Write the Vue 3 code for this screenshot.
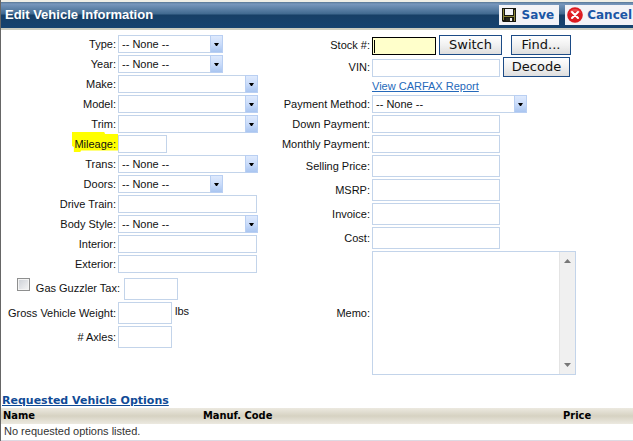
<script setup>
import { ref } from 'vue'

const none = '-- None --'
const leftFields = [
  { id: 'type', label: 'Type:', kind: 'select', size: 'short', value: none },
  { id: 'year', label: 'Year:', kind: 'select', size: 'short', value: none },
  { id: 'make', label: 'Make:', kind: 'select', size: 'long', value: '' },
  { id: 'model', label: 'Model:', kind: 'select', size: 'long', value: '' },
  { id: 'trim', label: 'Trim:', kind: 'select', size: 'long', value: '' },
  { id: 'mileage', label: 'Mileage:', kind: 'text', size: 'tiny', marked: true },
  { id: 'trans', label: 'Trans:', kind: 'select', size: 'long', value: none },
  { id: 'doors', label: 'Doors:', kind: 'select', size: 'short', value: none },
  { id: 'drive', label: 'Drive Train:', kind: 'text', size: 'long' },
  { id: 'body', label: 'Body Style:', kind: 'select', size: 'long', value: none },
  { id: 'interior', label: 'Interior:', kind: 'text', size: 'long' },
  { id: 'exterior', label: 'Exterior:', kind: 'text', size: 'long' },
]
const paymentFields = [
  { id: 'payment', label: 'Payment Method:', kind: 'select', size: 'wide', value: none },
  { id: 'down', label: 'Down Payment:', kind: 'text', size: 'medium' },
  { id: 'monthly', label: 'Monthly Payment:', kind: 'text', size: 'medium' },
  { id: 'selling', label: 'Selling Price:', kind: 'text', size: 'medium', tall: true },
  { id: 'msrp', label: 'MSRP:', kind: 'text', size: 'medium', tall: true },
  { id: 'invoice', label: 'Invoice:', kind: 'text', size: 'medium', tall: true },
  { id: 'cost', label: 'Cost:', kind: 'text', size: 'medium', tall: true },
]
const gasTax = ref(false)
</script>

<template>
  <main class="page">
    <header class="title-bar">
      <h1>Edit Vehicle Information</h1>
      <div class="actions">
        <button type="button" class="action">
          <svg width="14" height="14" viewBox="0 0 14 14" aria-hidden="true">
            <path d="M0 0H14V14H1L0 13Z" fill="#17170f" />
            <path d="M1 1H2V12H1ZM12 2H13V13H12ZM2 8H12V9H2Z" fill="#8b8438" />
            <path d="M3 1H11V7H3Z" fill="#f4f4f8" />
            <path d="M4 10H11V13H4Z" fill="#26261c" />
            <path d="M8 10H10V13H8Z" fill="#f0f0f0" />
          </svg>
          Save
        </button>
        <button type="button" class="action">
          <svg width="16" height="16" viewBox="0 0 16 16" aria-hidden="true">
            <circle cx="8" cy="8" r="7.8" fill="#dc1a20" />
            <path d="M2 6A6.5 6.5 0 0 1 14 6Q8 3 2 6Z" fill="#ee4a4c" />
            <path d="M5 5L11 11M11 5L5 11" stroke="#fff" stroke-width="2" stroke-linecap="round" />
          </svg>
          Cancel
        </button>
      </div>
    </header>

    <form class="form" @submit.prevent>
      <section class="column vehicle">
        <div v-for="f in leftFields" :key="f.id" class="row">
          <label :for="f.id" :class="{ marked: f.marked }">{{ f.label }}</label>
          <span v-if="f.kind === 'select'" class="select" :class="f.size">
            <select :id="f.id"><option>{{ f.value }}</option></select>
            <span class="arrow" aria-hidden="true"><svg width="5" height="3" viewBox="0 0 5 3"><path d="M0 0H5L3 3H2Z" /></svg></span>
          </span>
          <input v-else :id="f.id" type="text" class="box" :class="f.size" />
        </div>
        <div class="row tall gas">
          <input id="gas" v-model="gasTax" type="checkbox" class="check" />
          <label id="gas-label" for="gas">Gas Guzzler Tax:</label>
          <input type="text" class="box small" aria-labelledby="gas-label" />
        </div>
        <div class="row tall">
          <label for="weight">Gross Vehicle Weight:</label>
          <input id="weight" type="text" class="box small" />
          <span class="unit">lbs</span>
        </div>
        <div class="row tall">
          <label for="axles"># Axles:</label>
          <input id="axles" type="text" class="box small" />
        </div>
      </section>

      <section class="column sale">
        <div class="row lookup">
          <label for="stock">Stock #:</label>
          <span class="stock-box"><i class="caret"></i><input id="stock" type="text" /></span>
          <button type="button" class="push">Switch</button>
          <button type="button" class="push find">Find...</button>
        </div>
        <div class="row lookup">
          <label for="vin">VIN:</label>
          <input id="vin" type="text" class="box medium" />
          <button type="button" class="push decode">Decode</button>
        </div>
        <div class="row report"><a href="#">View CARFAX Report</a></div>
        <div v-for="f in paymentFields" :key="f.id" class="row" :class="{ tall: f.tall }">
          <label :for="f.id">{{ f.label }}</label>
          <span v-if="f.kind === 'select'" class="select" :class="f.size">
            <select :id="f.id"><option>{{ f.value }}</option></select>
            <span class="arrow" aria-hidden="true"><svg width="5" height="3" viewBox="0 0 5 3"><path d="M0 0H5L3 3H2Z" /></svg></span>
          </span>
          <input v-else :id="f.id" type="text" class="box" :class="f.size" />
        </div>
        <div class="row memo">
          <label for="memo">Memo:</label>
          <div class="memo-box">
            <textarea id="memo"></textarea>
            <span class="track" aria-hidden="true">
              <svg width="7" height="4" viewBox="0 0 7 4"><path d="M0 4L3.5 0L7 4Z" /></svg>
              <svg width="7" height="4" viewBox="0 0 7 4"><path d="M0 0H7L3.5 4Z" /></svg>
            </span>
          </div>
        </div>
      </section>
    </form>

    <section class="options">
      <a href="#">Requested Vehicle Options</a>
      <table>
        <thead>
          <tr><th class="name">Name</th><th class="code">Manuf. Code</th><th>Price</th></tr>
        </thead>
        <tbody>
          <tr><td colspan="3">No requested options listed.</td></tr>
        </tbody>
      </table>
    </section>
  </main>
</template>

<style>
body { margin: 0; background: #fff; }
</style>

<style scoped>
* { box-sizing: border-box; }
.page {
  border-left: 1px solid #666;
  font: 11px/14px "Liberation Sans", Arial, sans-serif;
  color: #111;
}
.title-bar {
  display: flex;
  align-items: center;
  justify-content: space-between;
  height: 30px;
  padding-left: 4px;
  border-top: 2px solid #efeee6;
  border-bottom: 2px solid #cdcdc0;
  background: linear-gradient(#587795 0, #7797bd 2px, #40698f 12px, #173f66 13px, #174370 100%);
}
h1 { margin: 0; font-size: 13px; line-height: 16px; color: #fff; }
.actions { display: flex; gap: 6px; }
.action {
  display: flex;
  align-items: center;
  gap: 5px;
  height: 20px;
  padding: 0 5px 0 3px;
  border: 0;
  background: #f3f3f7;
  color: #1b56a5;
  font: bold 12px/16px "DejaVu Sans", Verdana, sans-serif;
}
.action:last-child { gap: 4px; padding: 0 1px 0 2px; }

.form { display: flex; padding-top: 5px; }
.column { display: flex; flex-direction: column; gap: 2px; }
.vehicle { flex: 0 0 267px; }
.sale { flex: 1; }
.row { display: flex; align-items: center; height: 18px; }
.row.tall { height: 22px; }
.row label { flex: none; padding-right: 2px; text-align: right; white-space: nowrap; }
.vehicle label { width: 117px; }
.sale label { width: 104px; }
.marked { position: relative; z-index: 0; }
.marked::before {
  content: "";
  position: absolute;
  z-index: -1;
  inset: -5px 0 -1px 71px;
  background: #ff0;
  clip-path: polygon(0 0, 70% 0, 72% 10%, 100% 10%, 100% 92%, 20% 92%, 18% 100%, 4% 100%, 4% 75%, 0 70%);
}
.box, .select select, .memo-box {
  border: 1px solid #c3d4ea;
  background: #fff;
}
.box { height: 100%; padding: 0 3px; font: inherit; }
.tiny { width: 49px; }
.small { width: 54px; }
.short { width: 105px; }
.medium { width: 128px; }
.long { width: 140px; }
.box.long { width: 139px; }
.wide { width: 155px; }
.select { position: relative; height: 100%; }
.select select {
  appearance: none;
  width: 100%;
  height: 100%;
  padding: 0 14px 0 3px;
  border-radius: 0;
  color: #111;
  font: inherit;
}
.arrow {
  position: absolute;
  top: 0;
  right: 0;
  bottom: 0;
  display: grid;
  place-items: center;
  width: 13px;
  border: 1px solid #b9cff2;
  background: linear-gradient(#dfeafd, #cadcfa 50%, #a9c5f0);
  pointer-events: none;
}
.gas { padding-left: 16px; margin-top: 3px; }
.gas label { width: 91px; padding: 0 4px 3px 0; }
.check {
  appearance: none;
  align-self: flex-start;
  width: 13px;
  height: 13px;
  margin: 0 3px 0 0;
  border: 1px solid #8e8f8f;
  outline: 1px solid #f4f4f4;
  outline-offset: -2px;
  background: linear-gradient(135deg, #cbcfd5, #f6f6f6);
}
.check:checked { background: #3b6ea5; }
.unit { align-self: flex-start; padding: 2px 0 0 3px; }

.lookup { height: 20px; align-items: flex-end; }
.lookup label { padding-bottom: 3px; }
.lookup .box { height: 18px; }
.stock-box {
  display: flex;
  align-items: center;
  width: 64px;
  height: 18px;
  border: 1px solid #000;
  background: #ffffcb;
}
.stock-box input { width: 100%; min-width: 0; padding: 0; border: 0; outline: 0; background: none; font: inherit; }
.caret { flex: none; width: 1px; height: 13px; margin: 0 1px; background: #000; }
.push {
  width: 63px;
  height: 20px;
  margin-left: 3px;
  padding: 0;
  border: 1px solid #1c4b86;
  background: linear-gradient(#fff, #f1f1f1 50%, #dedede);
  color: #111;
  font: 13px/16px "DejaVu Sans", Verdana, sans-serif;
}
.find { width: 60px; margin-left: 9px; }
.decode { width: 67px; }
.report { height: 14px; padding-left: 104px; }
.report a { color: #2569ba; font-size: 11px; line-height: 14px; }

.row.memo { height: 124px; }
.memo-box { display: flex; width: 204px; height: 100%; }
.memo-box textarea { flex: 1; min-width: 0; padding: 2px; border: 0; outline: 0; resize: none; font: inherit; }
.track {
  display: flex;
  flex-direction: column;
  justify-content: space-between;
  align-items: center;
  width: 16px;
  padding: 7px 0;
  border-left: 1px solid #e4e4e4;
  background: #f0f0f0;
}
.track path { fill: #777; }

.options { padding-top: 18px; }
.options a {
  display: block;
  width: fit-content;
  padding-left: 1px;
  color: #0f4a96;
  font: bold 11px/15px "DejaVu Sans", Verdana, sans-serif;
}
table { width: 100%; border-collapse: collapse; table-layout: fixed; }
th {
  height: 16px;
  padding: 0 2px;
  text-align: left;
  font: bold 11px/16px "DejaVu Sans Condensed", Tahoma, sans-serif;
  color: #000;
}
thead tr { background: linear-gradient(#ece9e0, #d6d2c2 50%, #ece9e0); }
.name { width: 200px; }
.code { width: 360px; }
td { height: 16px; padding: 0 3px; line-height: 15px; border-bottom: 1px solid #ddd9e2; color: #333; }
</style>
